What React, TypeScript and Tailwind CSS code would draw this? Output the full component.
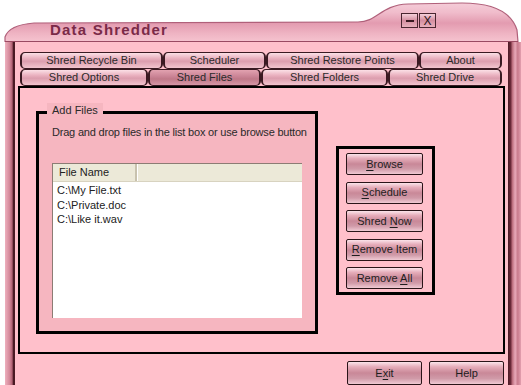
import React from 'react'

const font = { fontFamily: '"Liberation Sans", Arial, sans-serif' }

const TABS_TOP = [
  { label: 'Shred Recycle Bin', w: 'w-[143px]' },
  { label: 'Scheduler', w: 'w-[103px]' },
  { label: 'Shred Restore Points', w: 'w-[153px]' },
  { label: 'About', w: 'w-[83px]' },
]

const TABS_BOTTOM = [
  { label: 'Shred Options', w: 'w-[128px]' },
  { label: 'Shred Files', w: 'w-[113px]', active: true },
  { label: 'Shred Folders', w: 'w-[127px]' },
  { label: 'Shred Drive', w: 'w-[114px]' },
]

const FILES = ['C:\\My File.txt', 'C:\\Private.doc', 'C:\\Like it.wav']

// label with one underlined mnemonic letter
function Mnemonic({ text, at }: { text: string; at: number }) {
  return (
    <span className="whitespace-pre">
      {text.slice(0, at)}
      <span className="underline underline-offset-2">{text[at]}</span>
      {text.slice(at + 1)}
    </span>
  )
}

function Tab({ label, w, active }: { label: string; w: string; active?: boolean }) {
  return (
    <div
      className={`${w} h-[17px] flex items-center justify-center rounded-[5px] border-y border-x-2 border-[#3a1a22] text-[11px] text-[#2a2a2a] ${
        active
          ? 'bg-[linear-gradient(to_bottom,#e2a2b0_0%,#c98294_45%,#bf7888_60%,#d696a6_100%)]'
          : 'bg-[linear-gradient(to_bottom,#fbe0e6_0%,#eab2c0_35%,#dc9eae_55%,#f2c4ce_100%)]'
      }`}
    >
      {label}
    </div>
  )
}

function Btn({ children, w = 'w-[77px]', h = 'h-[22px]' }: { children: React.ReactNode; w?: string; h?: string }) {
  return (
    <div
      className={`${w} ${h} shrink-0 flex items-center justify-center rounded-[2px] border border-[#2a1418] text-[11px] text-[#1e1e1e] bg-[linear-gradient(to_bottom,#fbe4ea_0%,#e6adba_22%,#c98898_50%,#d09aa8_75%,#f0cad3_100%)]`}
    >
      {children}
    </div>
  )
}

function TitleBar() {
  return (
    <div className="relative h-[42px]">
      <svg className="absolute inset-0" width="521" height="42" viewBox="0 0 521 42">
        <defs>
          <linearGradient id="tb" x1="0" y1="0" x2="0" y2="42" gradientUnits="userSpaceOnUse">
            <stop offset="0" stopColor="#f6d2dc" />
            <stop offset="0.3" stopColor="#f0bccb" />
            <stop offset="0.55" stopColor="#e39bb0" />
            <stop offset="0.8" stopColor="#efb4c3" />
            <stop offset="1" stopColor="#f6c4d0" />
          </linearGradient>
        </defs>
        <path
          d="M5,42 L5,37 Q9,25 34,23 L358,22 C378,22 380,5 408,4 L462,3 C496,3 512,14 517,30 L518,42 Z"
          fill="url(#tb)"
          stroke="#b0607a"
          strokeWidth="1.2"
        />
        <line x1="5" y1="41.5" x2="518" y2="41.5" stroke="#9a4a62" strokeWidth="1" />
      </svg>
      <div className="relative flex items-start">
        <div
          className="pl-[50px] pt-[21px] text-[15px] font-bold tracking-[1.2px] text-[#7a2a48] leading-[18px]"
          style={font}
        >
          Data Shredder
        </div>
        <div className="ml-auto mr-[85px] mt-[13px] flex gap-[1px]">
          <div className="w-[17px] h-[15px] flex items-center justify-center border border-[#4a2630] bg-[linear-gradient(to_bottom,#f6d0da,#d48ea0,#e8b0bc)]">
            <div className="w-[8px] h-[2px] bg-[#3a1a22]" />
          </div>
          <div
            className="w-[17px] h-[15px] flex items-center justify-center border border-[#4a2630] bg-[linear-gradient(to_bottom,#f6d0da,#d48ea0,#e8b0bc)] text-[12px] leading-none text-[#2a1418]"
            style={font}
          >
            X
          </div>
        </div>
      </div>
    </div>
  )
}

export default function App() {
  return (
    <div className="w-[521px] h-[385px] bg-white overflow-hidden" style={font}>
      <TitleBar />
      <div className="flex h-[343px] ml-[5px]">
        {/* left frame */}
        <div className="w-[10px] bg-[linear-gradient(to_right,#eeb0be_0%,#d4899a_45%,#b46476_70%,#4a1a24_85%,#4a1a24_100%)]" />

        {/* client area */}
        <div className="w-[493px] bg-[#ffc0cb] flex flex-col pt-[10px] pl-[3px]">
          <div className="ml-[2px] w-[482px] flex flex-col">
            <div className="flex">
              {TABS_TOP.map((t) => (
                <Tab key={t.label} {...t} />
              ))}
            </div>
            <div className="flex">
              {TABS_BOTTOM.map((t) => (
                <Tab key={t.label} {...t} />
              ))}
            </div>
          </div>

          {/* tab panel */}
          <div className="w-[487px] h-[270px] border-2 border-black flex items-start pl-[16px] pt-[23px] gap-[18px]">
            {/* Add Files group */}
            <div className="relative w-[282px] h-[223px] shrink-0 border-[3px] border-black bg-[#f6b6c0] flex flex-col">
              <div className="absolute -top-[11px] left-[8px] px-[5px] h-[14px] bg-[#f6b6c0] text-[11px] leading-[14px] text-[#2a2a2a]">
                Add Files
              </div>
              <div className="pl-[13px] pt-[12px] whitespace-nowrap text-[11px] tracking-[-0.2px] leading-[13px] text-[#2a2a2a]">
                Drag and drop files in the list box or use browse button
              </div>
              <div className="ml-[13px] mt-[24px] w-[250px] h-[155px] bg-white border-l border-t border-[#8c7c74] border-r-[#fbe4ea] border-b-[#fbe4ea] flex flex-col">
                <div className="h-[18px] flex bg-[#ece9d8] border-b border-[#d8d3c0]">
                  <div className="w-[84px] h-full flex items-center pl-[6px] border-r-2 border-[#c8c2ae] text-[11px] text-[#222]">
                    File Name
                  </div>
                  <div className="flex-1 border-l border-white" />
                </div>
                <div className="pl-[4px] pt-[1px] flex flex-col text-[11px] leading-[14.5px] text-[#222]">
                  {FILES.map((f) => (
                    <div key={f}>{f}</div>
                  ))}
                </div>
              </div>
            </div>

            {/* action buttons */}
            <div className="mt-[35px] w-[99px] h-[149px] shrink-0 border-[3px] border-black flex flex-col gap-[6.5px] pl-[7px] pt-[4px]">
              <Btn>
                <Mnemonic text="Browse" at={0} />
              </Btn>
              <Btn>
                <Mnemonic text="Schedule" at={0} />
              </Btn>
              <Btn>
                <Mnemonic text="Shred Now" at={6} />
              </Btn>
              <Btn>
                <Mnemonic text="Remove Item" at={0} />
              </Btn>
              <Btn>
                <Mnemonic text="Remove All" at={7} />
              </Btn>
            </div>
          </div>

          {/* bottom buttons */}
          <div className="flex justify-end gap-[7px] pr-[4px] mt-[7px]">
            <Btn w="w-[75px]" h="h-[24px]">
              <Mnemonic text="Exit" at={1} />
            </Btn>
            <Btn w="w-[75px]" h="h-[24px]">
              Help
            </Btn>
          </div>
        </div>

        {/* right frame */}
        <div className="w-[13px] bg-[linear-gradient(to_right,#4a1a24_0%,#6a2838_20%,#c07282_35%,#e8a8b8_55%,#c87a8c_75%,#e4a0b0_100%)]" />
      </div>
    </div>
  )
}
